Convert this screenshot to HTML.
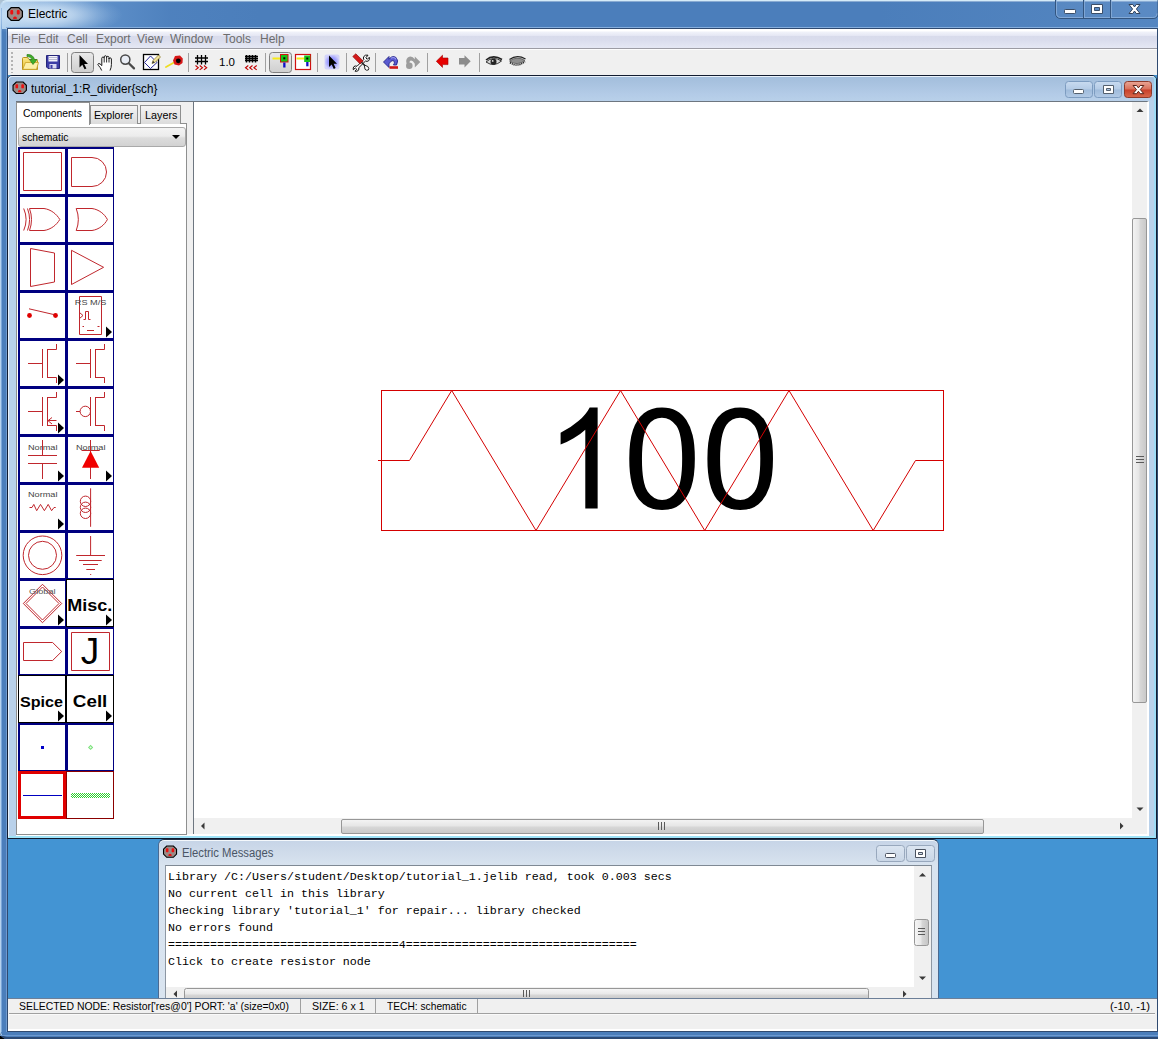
<!DOCTYPE html>
<html>
<head>
<meta charset="utf-8">
<title>Electric</title>
<style>
*{box-sizing:border-box;margin:0;padding:0}
html,body{width:1158px;height:1039px;overflow:hidden;background:#000}
body{font-family:"Liberation Sans",sans-serif;font-size:12px;color:#000;position:relative}
.abs{position:absolute}
svg{position:absolute;overflow:visible}
/* ---------- outer window frame ---------- */
#frame{left:0;top:0;width:1170px;height:1039px;border-radius:7px;background:#4b7ebb;overflow:hidden}
#frame-top{left:0;top:0;width:1170px;height:29px;background:linear-gradient(90deg,rgba(200,226,247,.85) 0,rgba(165,200,235,.62) 40px,rgba(120,168,220,.42) 100px,rgba(95,145,205,.16) 170px,rgba(80,130,195,0) 260px,rgba(80,130,195,0) 75%,rgba(120,165,215,.22) 100%)}
#frame-edge{left:0;top:0;width:1170px;height:1039px;border-radius:7px;border-top:1px solid #d5ebf8;border-left:1px solid #b5d2ee;border-bottom:2px solid #2c4a75;box-shadow:inset 0 1px 0 rgba(255,255,255,.35)}
#title-glow{left:-30px;top:-8px;width:170px;height:44px;background:radial-gradient(ellipse closest-side at 45% 52%,rgba(232,244,253,.8) 0,rgba(226,240,252,.62) 35%,rgba(215,233,250,.3) 65%,rgba(210,230,250,.1) 85%,rgba(210,230,250,0) 100%)}
#title{left:28px;top:7px;font-size:12px;line-height:14px;color:#000}
#client-border{left:7px;top:28px;width:1151px;height:1004px;background:#2f4a70}
#client{left:8px;top:29px;width:1149px;height:1002px;background:#4394d3}
/* ---------- menubar / toolbar ---------- */
#menubar{left:8px;top:29px;width:1149px;height:20px;background:linear-gradient(#ffffff 0,#ffffff 8%,#eff1f9 18%,#e4e6f3 36%,#d8dbeb 39%,#dadded 60%,#e5e8f4 100%);border-bottom:1px solid #9c9ca4}
.menu{top:32px;font-size:12px;line-height:14px;color:#6d6d6d}
#toolbar{left:8px;top:49px;width:1149px;height:26px;background:#f0f0f0;border-top:1px solid #fdfdfd}
.tsep{top:52px;width:2px;height:20px;border-left:1px solid #a0a0a0;border-right:1px solid #fff}
/* ---------- inner window ---------- */
#iw{left:7px;top:75px;width:1150px;height:764px;border:1px solid #121c30;border-radius:5px 5px 0 0;
 background:linear-gradient(180deg,#a2bddb 0,#a9c3e0 8px,#b3cbe7 18px,#b9d1ea 26px,#b9d1ea 100%)}
#iw-hl{left:8px;top:76px;width:1148px;height:762px;border:1px solid #e9f2fb;border-bottom:2px solid #9fe3f8;border-right:2px solid #9fdcf5;border-radius:4px 4px 0 0}
#iw-title{left:31.200px;top:82px;font-size:12px;line-height:14px;white-space:pre;transform-origin:0 0;transform:scaleX(.971)}
#iw-body{left:16px;top:101px;width:1133px;height:735px;background:#f0f0f0;border-top:1px solid #6d7680;border-right:2px solid #fff;border-bottom:2px solid #fff}
/* ---------- left tabbed pane ---------- */
.tab{font-size:11px;line-height:13px;text-align:center;border:1px solid #8e8f8f;border-bottom:none}
#tab1{left:16px;top:102px;width:74px;height:23px;background:#fff;padding-top:5px;font-size:11px}
#tab2{left:90px;top:105px;width:48px;height:19px;background:linear-gradient(#f4f4f4,#e6e6e6 55%,#dcdcdc);padding-top:4px}
#tab3{left:140px;top:105px;width:41px;height:19px;background:linear-gradient(#f4f4f4,#e6e6e6 55%,#dcdcdc);padding-top:4px}
#tabpane{left:16px;top:123px;width:171px;height:712px;background:#fff;border:1px solid #8e8f8f}
#combo{left:18px;top:127px;width:168px;height:20px;border:1px solid #a9a9a9;border-radius:3px;background:linear-gradient(#f4f4f4 0,#ececec 45%,#dcdcdc 55%,#d2d2d2 100%);font-size:11px;line-height:13px;padding:3px 0 0 3px}
#combo-arrow{left:172px;top:135px;width:0;height:0;border-left:4px solid transparent;border-right:4px solid transparent;border-top:4px solid #000}
.tt{font-size:11px;line-height:13px;white-space:pre;transform-origin:0 0}
/* ---------- canvas ---------- */
#canvas{left:193px;top:101px;width:939px;height:717px;background:#fff;border-left:1px solid #6d7680;border-top:1px solid #6d7680}
#vsb{left:1132px;top:102px;width:15px;height:716px;background:#f0f0f0}
#hsb{left:194px;top:818px;width:938px;height:16px;background:#f0f0f0}
.thumbv{border:1px solid #979797;border-radius:2px;background:linear-gradient(90deg,#f3f3f3 0,#e6e6e6 45%,#d7d7d7 55%,#c9c9c9 100%)}
.thumbh{border:1px solid #979797;border-radius:2px;background:linear-gradient(180deg,#f3f3f3 0,#e6e6e6 45%,#d7d7d7 55%,#c9c9c9 100%)}
/* ---------- palette ---------- */
#pal{left:18px;top:147px;width:96px;height:673px}
.cell{position:absolute;width:49px;height:49px;border:2px solid #000080;border-right-width:1px;border-bottom-width:1px;background:#fff}
/* ---------- messages ---------- */
#mw{left:158px;top:839px;width:781px;height:159px;border:1px solid #4a6a92;border-top-color:#1f2f47;border-bottom:none;border-radius:6px 6px 0 0;box-shadow:inset 0 1px 0 #f4f8fc;
 background:linear-gradient(180deg,#c6d4e7 0,#cfdbea 12px,#d8e3ef 25px,#d9e4f0 100%)}
#mw-title{left:181.500px;top:846px;font-size:12px;line-height:14px;color:#4a5566;white-space:pre;transform-origin:0 0;transform:scaleX(.939)}
#mw-body{left:165px;top:865px;width:767px;height:133px;background:#fff;border-top:1px solid #7f8994;border-left:1px solid #8d97a3;border-right:1px solid #8d97a3}
.msg{left:168px;font-family:"Liberation Mono",monospace;font-size:11.667px;line-height:14px;white-space:pre;color:#000}
/* ---------- status bar ---------- */
#status{left:8px;top:998px;width:1149px;height:33px;background:#f0f0f0;border-top:1px solid #6c7f98;border-bottom:2px solid #fff}
.st{top:1000px;font-size:11px;line-height:13px;white-space:pre;transform-origin:0 0}
.ssep{top:999px;width:1px;height:14px;background:#a0a0a0}
</style>
</head>
<body>
<div id="frame" class="abs"></div>
<div id="frame-top" class="abs"></div>
<div id="frame-edge" class="abs"></div>
<div class="abs" style="left:1px;top:8px;width:1px;height:1024px;background:#7ba6d8"></div>
<div class="abs" style="left:6px;top:29px;width:1px;height:1003px;background:#6f9bd0"></div>
<div class="abs" style="left:0;top:1035px;width:1158px;height:1px;background:#6c99cf"></div>
<div id="title-glow" class="abs"></div>
<div id="title" class="abs">Electric</div>
<div class="abs" style="left:6px;top:27px;width:1152px;height:1px;background:#86aedd"></div>
<div id="client-border" class="abs"></div>
<div id="client" class="abs"></div>

<div id="menubar" class="abs"></div>
<span class="menu abs" style="left:11px">File</span>
<span class="menu abs" style="left:38px">Edit</span>
<span class="menu abs" style="left:67px">Cell</span>
<span class="menu abs" style="left:96px">Export</span>
<span class="menu abs" style="left:137px">View</span>
<span class="menu abs" style="left:170px">Window</span>
<span class="menu abs" style="left:223px">Tools</span>
<span class="menu abs" style="left:260px">Help</span>

<div id="toolbar" class="abs"></div>
<svg width="1158" height="27" viewBox="0 49 1158 27" style="left:0;top:49px">
<defs>
<linearGradient id="btnsel" x1="0" y1="0" x2="0" y2="1"><stop offset="0" stop-color="#e9e9e9"/><stop offset="1" stop-color="#cfcfcf"/></linearGradient>
<linearGradient id="fold" x1="0" y1="0" x2="0" y2="1"><stop offset="0" stop-color="#fbe88a"/><stop offset="1" stop-color="#e8bf2c"/></linearGradient>
<radialGradient id="glow"><stop offset="0" stop-color="#7f7fff"/><stop offset=".6" stop-color="#a3a3ff"/><stop offset="1" stop-color="#d4d4fa"/></radialGradient>
</defs>
<!-- grip -->
<g fill="#b4b4b4"><rect x="11" y="52" width="2" height="2"/><rect x="11" y="56" width="2" height="2"/><rect x="11" y="60" width="2" height="2"/><rect x="11" y="64" width="2" height="2"/><rect x="11" y="68" width="2" height="2"/><rect x="11" y="72" width="2" height="1"/></g>
<!-- open -->
<path d="M22.5 69.5V58.5Q22.5 57.5 23.5 57.5H27.5L29 59.5H36.5Q37.5 59.5 37.5 60.5V69.5Z" fill="url(#fold)" stroke="#b8931c" stroke-width="1"/>
<path d="M22.8 69.3L25.5 62.5H38.5L36.5 69.3Z" fill="#fdf0a8" stroke="#c9a227" stroke-width=".8"/>
<path d="M27 54.5Q33 54 34.5 59.5H37L33 64.5L29.5 59.5H32Q31 56.5 27 56.5Z" fill="#3fae2a" stroke="#2c7d1c" stroke-width=".7"/>
<!-- save -->
<path d="M46.5 55.5H59.5V68.5H48L46.5 67Z" fill="#3b3ba6" stroke="#26267a" stroke-width="1"/>
<rect x="48.5" y="56" width="9" height="5.5" fill="#f4f4fb"/>
<path d="M49 57.5H57M49 59.5H57" stroke="#a9a9c9" stroke-width=".8"/>
<rect x="49.5" y="64" width="7" height="4.5" fill="#d7d7f2"/>
<rect x="50.5" y="65" width="2" height="3.5" fill="#3b3ba6"/>
<!-- separators -->
<g stroke="#a0a0a0" stroke-width="1">
<path d="M67.5 53V72M188.500 53V72M265.500 53V72M317.500 53V72M346.500 53V72M375.500 53V72M427.500 53V72M479.500 53V72"/>
</g>
<!-- selected button 1 -->
<rect x="71.500" y="52.500" width="22" height="20" rx="3" fill="url(#btnsel)" stroke="#7f7f7f"/>
<path d="M79.500 55V67.500L82.300 64.800L84.600 69.300L86.400 68.400L84.200 64H88Z" fill="#000"/>
<!-- hand -->
<path d="M101.700 70.500Q100.500 67.500 98.300 65.300Q97.300 64 98.500 63.500Q100 63.300 101.800 65.600V58.200Q102 57 103 57Q104 57 104.200 58.200V56.900Q104.400 55.700 105.400 55.700Q106.400 55.700 106.600 56.900V57.500Q106.800 56.300 107.800 56.300Q108.800 56.300 109 57.500V59Q109.200 57.900 110.200 57.900Q111.200 57.900 111.400 59V64.500Q111.400 67.500 110 70.500" fill="#fdfdfd" stroke="#1a1a1a" stroke-width="1" stroke-linejoin="round"/>
<path d="M104.200 58.200V62.500M106.600 57V62.500M109 58V62.500" stroke="#1a1a1a" stroke-width=".9" fill="none"/>
<!-- magnifier -->
<circle cx="125.300" cy="59.600" r="4.600" fill="#e9edf5" stroke="#4a4a4a" stroke-width="1.500"/>
<path d="M128.800 63.200L134 68.400" stroke="#4a4a4a" stroke-width="2.200" stroke-linecap="round"/>
<!-- outline edit -->
<rect x="143.500" y="54.500" width="15" height="15" fill="#fff" stroke="#000" stroke-width="1.300"/>
<path d="M150.500 56L157 62.500L150.500 68.500L144.500 62.500Z" fill="none" stroke="#2b2b9a" stroke-width="1"/>
<path d="M152 63.500L153 60.500L158.500 55L160.500 57L155 62.500Z" fill="#f3e39a" stroke="#8a7a2e" stroke-width=".7"/>
<path d="M152 63.500L153 60.800L154.700 62.500Z" fill="#333"/>
<!-- measure -->
<path d="M166 67L174 62.500" stroke="#eedd22" stroke-width="1.800" stroke-linecap="round"/>
<path d="M175 56L180 55.500L182.800 58.500L182.500 63L179 65.500L174.500 64.500L173 60.500Z" fill="#d81818"/>
<circle cx="178.300" cy="60.800" r="2.400" fill="#000"/>
<!-- grid coarse -->
<path d="M197.500 55V64.500M201.500 55V64.500M205.500 55V64.500M195 58H208M195 61.500H208" stroke="#000" stroke-width="1.300"/>
<path d="M195.500 65.500L198.300 67.700L195.500 69.900M199.700 65.500L202.500 67.700L199.700 69.900M203.900 65.500L206.700 67.700L203.900 69.900" stroke="#c00000" stroke-width="1.100" fill="none"/>
<text x="227" y="66" font-family="Liberation Sans, sans-serif" font-size="11.500" text-anchor="middle" fill="#000">1.0</text>
<!-- grid fine -->
<path d="M246.500 55V62.500M249.500 55V62.500M252.500 55V62.500M255.500 55V62.500M245 56.500H258M245 58.500H258M245 60.500H258" stroke="#000" stroke-width="1.500"/>
<path d="M248.300 65.500L245.500 67.700L248.300 69.900M252.500 65.500L249.700 67.700L252.500 69.900M256.700 65.500L253.900 67.700L256.700 69.900" stroke="#c00000" stroke-width="1.100" fill="none"/>
<!-- selected button 2 + object select icon -->
<rect x="269.500" y="52.500" width="22" height="20" rx="3" fill="url(#btnsel)" stroke="#7f7f7f"/>
<rect x="272.500" y="57.500" width="8.500" height="2" fill="#f7ea17"/>
<rect x="280.500" y="54.500" width="7.500" height="7.500" fill="#16c416" stroke="#d01010" stroke-width="1"/>
<rect x="283.300" y="57.300" width="2" height="2" fill="#000"/>
<rect x="283.200" y="62.500" width="2.300" height="5" fill="#1010c8"/>
<!-- area select icon -->
<rect x="295.500" y="54.500" width="15" height="15" fill="#fff" stroke="#d01010" stroke-width="1.200"/>
<rect x="296.500" y="57.500" width="8" height="2" fill="#f7ea17"/>
<rect x="304.200" y="55.500" width="6" height="6.500" fill="#16c416"/>
<rect x="306.300" y="57.500" width="2" height="2" fill="#000"/>
<rect x="306.200" y="62" width="2.300" height="4.300" fill="#1010c8"/>
<!-- special select -->
<rect x="324.500" y="54.500" width="15" height="15" rx="2" fill="url(#glow)"/>
<path d="M329 55.500V67L331.700 64.500L333.800 69L335.600 68.100L333.600 63.800H337Z" fill="#000"/>
<!-- prefs: screwdriver + wrench -->
<path d="M368 55.200Q365.200 54.500 363.800 56.500Q363 58 363.800 59.500L357 66.300Q355.500 65.500 354 66.500Q352.800 67.800 353.300 69.800L355.300 67.900L356.800 69.300L355 71.200Q357 71.700 358.300 70.500Q359.300 69 358.700 67.800L365.500 61Q367 61.800 368.600 60.800Q369.800 59.500 369.300 57.300L367.300 59.300L365.800 57.800Z" fill="#fff" stroke="#111" stroke-width="1" stroke-linejoin="round"/>
<path d="M352.800 56.500L355.800 53.800L363.200 61L360.200 64Z" fill="#d41a1a" stroke="#8e0d0d" stroke-width=".7"/>
<path d="M361.500 62.300L365 65.800" stroke="#222" stroke-width="1.400"/>
<path d="M364.300 65L367.800 66.500Q369.500 68.500 368.300 70Q366.500 70.800 365 69.300Z" fill="#fff" stroke="#111" stroke-width=".9" stroke-linejoin="round"/>
<!-- undo -->
<path d="M383.500 62L389 56.500V59.300Q392 55 396 57.500Q399 60.500 396.500 65H393.500Q395.500 61.500 393 60.500Q391 60.300 389 63.800V67.500Z" fill="#5a5ad0" stroke="#26268a" stroke-width=".9" stroke-linejoin="round"/>
<path d="M391 58.300Q394 56.300 396.300 59.300" stroke="#9a9af0" stroke-width="1.100" fill="none"/>
<rect x="389.500" y="66.200" width="8.500" height="2.600" fill="#d01818"/>
<!-- redo (disabled) -->
<path d="M420.300 62L414.800 56.500V59.300Q411.800 55 407.800 57.500Q404.800 60.500 407.300 65H410.300Q408.300 61.500 410.800 60.500Q412.800 60.300 414.800 63.800V67.500Z" fill="#9c9c9c"/>
<circle cx="409.300" cy="65.800" r="3.300" fill="#9c9c9c"/>
<!-- back / fwd -->
<path d="M436.300 61.300L442.500 55.200V58H448V64.600H442.500V67.400Z" fill="#e60000" stroke="#a00000" stroke-width=".6"/>
<path d="M470.700 61.300L464.500 55.200V58H459V64.600H464.500V67.400Z" fill="#8c8c8c"/>
<!-- eye open -->
<path d="M486 62Q493 55.500 501.500 61Q494 67.500 486 62Z" fill="#d9d9d9" stroke="#333" stroke-width="1"/>
<path d="M486 60Q493 54 502 59.500" stroke="#222" stroke-width="1.600" fill="none"/>
<circle cx="493.500" cy="61.700" r="3" fill="#222"/>
<circle cx="492.700" cy="60.900" r=".9" fill="#ddd"/>
<!-- eye closed -->
<path d="M509.500 61Q517 55.500 525 60.500Q517 66.500 509.500 61Z" fill="#8e8e8e" stroke="#555" stroke-width=".8"/>
<path d="M509.500 59.500Q517 54 525.500 59" stroke="#222" stroke-width="1.400" fill="none"/>
<path d="M510 62.500Q517 68 525 61.500" stroke="#222" stroke-width="1.600" fill="none" stroke-dasharray="1.200 .8"/>
</svg>


<div id="iw" class="abs"></div>
<div id="iw-hl" class="abs"></div>
<div id="iw-title" class="abs">tutorial_1:R_divider{sch}</div>
<div id="iw-body" class="abs"></div>

<div id="tabpane" class="abs"></div>
<div id="tab1" class="abs tab"></div>
<div id="tab2" class="abs tab"></div>
<div id="tab3" class="abs tab"></div>
<div class="abs tt" style="left:22.900px;top:107px;transform:scaleX(.944)">Components</div>
<div class="abs tt" style="left:94.300px;top:109px;transform:scaleX(.96)">Explorer</div>
<div class="abs tt" style="left:145px;top:109px;transform:scaleX(.98)">Layers</div>
<div id="combo" class="abs"></div>
<div class="abs tt" style="left:21.700px;top:131px;transform:scaleX(.937)">schematic</div>
<div id="combo-arrow" class="abs"></div>

<div id="pal" class="abs">
<svg width="96" height="673" viewBox="0 0 96 673" style="left:0;top:0" shape-rendering="auto"><g transform="translate(0,0)"><rect x="0" y="0" width="48" height="48" fill="#fff"/><path d="M0 0H48V48H0Z M2 2V47H47V2Z" fill="#000080" fill-rule="evenodd"/><path d="M5.5 5.5H43.5V43.5H5.5Z" fill="none" stroke="#c0272d" stroke-width="1" /></g>
<g transform="translate(48,0)"><rect x="0" y="0" width="48" height="48" fill="#fff"/><path d="M0 0H48V48H0Z M2 2V47H47V2Z" fill="#000080" fill-rule="evenodd"/><path d="M5.5 10.5H26A14.5 14.5 0 0 1 26 39.5H5.5Z" fill="none" stroke="#c0272d" stroke-width="1" /></g>
<g transform="translate(0,48)"><rect x="0" y="0" width="48" height="48" fill="#fff"/><path d="M0 0H48V48H0Z M2 2V47H47V2Z" fill="#000080" fill-rule="evenodd"/><path d="M11.5 13.5H26C33 14.5 38.5 19 41.8 24.5C38.5 30 33 34.500 26 35.500H11.5Q15.5 24.5 11.5 13.5Z" fill="none" stroke="#c0272d" stroke-width="1" /><path d="M5.7 13.5Q10.5 24.5 5.7 35.5" fill="none" stroke="#c0272d" stroke-width="1" /><path d="M9.5 13.5Q13.700 24.5 9.5 35.5" fill="none" stroke="#c0272d" stroke-width="1" /></g>
<g transform="translate(48,48)"><rect x="0" y="0" width="48" height="48" fill="#fff"/><path d="M0 0H48V48H0Z M2 2V47H47V2Z" fill="#000080" fill-rule="evenodd"/><path d="M10.2 13.5H26C33 14.5 38.5 19 41.4 24.5C38.5 30 33 34.5 26 35.5H10.2Q14.5 24.5 10.2 13.5Z" fill="none" stroke="#c0272d" stroke-width="1" /></g>
<g transform="translate(0,96)"><rect x="0" y="0" width="48" height="48" fill="#fff"/><path d="M0 0H48V48H0Z M2 2V47H47V2Z" fill="#000080" fill-rule="evenodd"/><path d="M12.5 5.5L36.5 10V39L12.5 43.5Z" fill="none" stroke="#c0272d" stroke-width="1" /></g>
<g transform="translate(48,96)"><rect x="0" y="0" width="48" height="48" fill="#fff"/><path d="M0 0H48V48H0Z M2 2V47H47V2Z" fill="#000080" fill-rule="evenodd"/><path d="M5.5 7.3L37.6 24.3L5.5 41.5Z" fill="none" stroke="#c0272d" stroke-width="1" /></g>
<g transform="translate(0,144)"><rect x="0" y="0" width="48" height="48" fill="#fff"/><path d="M0 0H48V48H0Z M2 2V47H47V2Z" fill="#000080" fill-rule="evenodd"/><circle cx="11.5" cy="24.5" r="2.4" fill="#e00000"/><circle cx="37.5" cy="24.5" r="2.4" fill="#e00000"/><path d="M11 17.8L36 23.6" fill="none" stroke="#c0272d" stroke-width="1" /></g>
<g transform="translate(48,144)"><rect x="0" y="0" width="48" height="48" fill="#fff"/><path d="M0 0H48V48H0Z M2 2V47H47V2Z" fill="#000080" fill-rule="evenodd"/><path d="M13.5 5.5H35.5V43.5H13.5Z" fill="none" stroke="#c0272d" stroke-width="1" /><path d="M13.5 21.5L17 24.5L13.5 27.5" fill="none" stroke="#c0272d" stroke-width="1" /><path d="M17.5 28.5H19.5V20.5H22.5V28.5H24.5" fill="none" stroke="#c0272d" stroke-width="1" /><path d="M16.5 35.5H18M31.5 35.5H33.5M21 39.5H28" fill="none" stroke="#c0272d" stroke-width="1" /><text x="24.6" y="13.5" font-family="Liberation Sans, sans-serif" font-size="8" font-weight="normal" fill="#444" text-anchor="middle" textLength="31.5" lengthAdjust="spacingAndGlyphs">RS M/S</text><path d="M40 35.5L46 41L40 46.5Z" fill="#000"/></g>
<g transform="translate(0,192)"><rect x="0" y="0" width="48" height="48" fill="#fff"/><path d="M0 0H48V48H0Z M2 2V47H47V2Z" fill="#000080" fill-rule="evenodd"/><path d="M10 24.5H24.5M24.5 10V39M29.5 10V39M29.5 10.5H38.5V5M29.5 38.5H38.5V44" fill="none" stroke="#c0272d" stroke-width="1" /><path d="M40 35.5L46 41L40 46.5Z" fill="#000"/></g>
<g transform="translate(48,192)"><rect x="0" y="0" width="48" height="48" fill="#fff"/><path d="M0 0H48V48H0Z M2 2V47H47V2Z" fill="#000080" fill-rule="evenodd"/><path d="M10 24.5H24.5M24.5 10V39M29.5 10V39M29.5 10.5H38.5V5M29.5 38.5H38.5V44" fill="none" stroke="#c0272d" stroke-width="1" /></g>
<g transform="translate(0,240)"><rect x="0" y="0" width="48" height="48" fill="#fff"/><path d="M0 0H48V48H0Z M2 2V47H47V2Z" fill="#000080" fill-rule="evenodd"/><path d="M10 24.5H24.5M24.5 10V39M29.5 10V39M29.5 10.5H38.5V5M29.5 38.5H38.5V44" fill="none" stroke="#c0272d" stroke-width="1" /><path d="M38.5 33.5H30M34 30.5L30 33.7L34 37" fill="none" stroke="#c0272d" stroke-width="1" /><path d="M40 35.5L46 41L40 46.5Z" fill="#000"/></g>
<g transform="translate(48,240)"><rect x="0" y="0" width="48" height="48" fill="#fff"/><path d="M0 0H48V48H0Z M2 2V47H47V2Z" fill="#000080" fill-rule="evenodd"/><path d="M10 24.5H14M24.5 10V39M29.5 10V39M29.5 10.5H38.5V5M29.5 38.5H38.5V44" fill="none" stroke="#c0272d" stroke-width="1" /><circle cx="19.3" cy="24.4" r="5.2" fill="none" stroke="#c0272d"/></g>
<g transform="translate(0,288)"><rect x="0" y="0" width="48" height="48" fill="#fff"/><path d="M0 0H48V48H0Z M2 2V47H47V2Z" fill="#000080" fill-rule="evenodd"/><text x="24.7" y="15" font-family="Liberation Sans, sans-serif" font-size="8" font-weight="normal" fill="#444" text-anchor="middle" textLength="29.5" lengthAdjust="spacingAndGlyphs">Normal</text><path d="M24.5 5V20.5M10 20.5H39M10 28.5H39M24.5 28.5V44" fill="none" stroke="#c0272d" stroke-width="1" /><path d="M40 35.5L46 41L40 46.5Z" fill="#000"/></g>
<g transform="translate(48,288)"><rect x="0" y="0" width="48" height="48" fill="#fff"/><path d="M0 0H48V48H0Z M2 2V47H47V2Z" fill="#000080" fill-rule="evenodd"/><text x="24.7" y="15" font-family="Liberation Sans, sans-serif" font-size="8" font-weight="normal" fill="#444" text-anchor="middle" textLength="29.5" lengthAdjust="spacingAndGlyphs">Normal</text><path d="M24.5 5V44M15.5 15.5H33.7" fill="none" stroke="#c0272d" stroke-width="1" /><path d="M24.6 16L33.2 32.8H16Z" fill="#f00000"/><path d="M40 35.5L46 41L40 46.5Z" fill="#000"/></g>
<g transform="translate(0,336)"><rect x="0" y="0" width="48" height="48" fill="#fff"/><path d="M0 0H48V48H0Z M2 2V47H47V2Z" fill="#000080" fill-rule="evenodd"/><text x="24.7" y="13.8" font-family="Liberation Sans, sans-serif" font-size="8" font-weight="normal" fill="#444" text-anchor="middle" textLength="29.5" lengthAdjust="spacingAndGlyphs">Normal</text><path d="M11.5 24.5H14L15.8 21.4L18.7 27.7L22.5 21.4L26.4 27.7L30.2 21.4L33.6 27.7L36 24.5H37.7" fill="none" stroke="#c0272d" stroke-width="1" /><path d="M40 35.5L46 41L40 46.5Z" fill="#000"/></g>
<g transform="translate(48,336)"><rect x="0" y="0" width="48" height="48" fill="#fff"/><path d="M0 0H48V48H0Z M2 2V47H47V2Z" fill="#000080" fill-rule="evenodd"/><path d="M24.6 5.3V43.8" fill="none" stroke="#c0272d" stroke-width="1" /><circle cx="19.5" cy="18.3" r="5.2" fill="none" stroke="#c0272d"/><circle cx="19.5" cy="24.3" r="5.2" fill="none" stroke="#c0272d"/><circle cx="19.5" cy="30.3" r="5.2" fill="none" stroke="#c0272d"/></g>
<g transform="translate(0,384)"><rect x="0" y="0" width="48" height="48" fill="#fff"/><path d="M0 0H48V48H0Z M2 2V47H47V2Z" fill="#000080" fill-rule="evenodd"/><circle cx="24.5" cy="24.3" r="19.3" fill="none" stroke="#c0272d"/><circle cx="24.5" cy="24.3" r="14" fill="none" stroke="#c0272d"/></g>
<g transform="translate(48,384)"><rect x="0" y="0" width="48" height="48" fill="#fff"/><path d="M0 0H48V48H0Z M2 2V47H47V2Z" fill="#000080" fill-rule="evenodd"/><path d="M24.6 5V24.5M10.2 24.5H39M13 29.5H35.7M17 33.5H32M20.3 38.5H29M24.2 43.5H25.2" fill="none" stroke="#c0272d" stroke-width="1" /></g>
<g transform="translate(0,432)"><rect x="0" y="0" width="48" height="48" fill="#fff"/><path d="M0 0H48V48H0Z M2 2V47H47V2Z" fill="#000080" fill-rule="evenodd"/><path d="M24.5 5.3L43.7 24.5L24.5 43.7L5.3 24.5Z" fill="none" stroke="#c0272d" stroke-width="1" /><path d="M24.5 8L41 24.5L24.5 41L8 24.5Z" fill="none" stroke="#c0272d" stroke-width="1" /><text x="24.3" y="15.4" font-family="Liberation Sans, sans-serif" font-size="8" font-weight="normal" fill="#555" text-anchor="middle" textLength="26.5" lengthAdjust="spacingAndGlyphs">Global</text><path d="M40 35.5L46 41L40 46.5Z" fill="#000"/></g>
<g transform="translate(48,432)"><rect x="0" y="0" width="48" height="48" fill="#fff"/><path d="M0 0H48V48H0Z M1 1V47H47V1Z" fill="#000" fill-rule="evenodd"/><text x="23.7" y="32.2" font-family="Liberation Sans, sans-serif" font-size="16" font-weight="bold" fill="#000" text-anchor="middle" textLength="45" lengthAdjust="spacingAndGlyphs">Misc.</text><path d="M40 35.5L46 41L40 46.5Z" fill="#000"/></g>
<g transform="translate(0,480)"><rect x="0" y="0" width="48" height="48" fill="#fff"/><path d="M0 0H48V48H0Z M2 2V47H47V2Z" fill="#000080" fill-rule="evenodd"/><path d="M5.5 15.5H34.6L43.7 24.5L34.6 33.5H5.5Z" fill="none" stroke="#c0272d" stroke-width="1" /></g>
<g transform="translate(48,480)"><rect x="0" y="0" width="48" height="48" fill="#fff"/><path d="M0 0H48V48H0Z M2 2V47H47V2Z" fill="#000080" fill-rule="evenodd"/><path d="M5.5 5.5H43.5V43.5H5.5Z" fill="none" stroke="#c0272d" stroke-width="1" /><text x="24" y="37.2" font-family="Liberation Sans, sans-serif" font-size="37" font-weight="normal" fill="#000" text-anchor="middle">J</text></g>
<g transform="translate(0,528)"><rect x="0" y="0" width="48" height="48" fill="#fff"/><path d="M0 0H48V48H0Z M1 1V47H47V1Z" fill="#000" fill-rule="evenodd"/><text x="23.5" y="31.6" font-family="Liberation Sans, sans-serif" font-size="15.5" font-weight="bold" fill="#000" text-anchor="middle" textLength="43" lengthAdjust="spacingAndGlyphs">Spice</text><path d="M40 35.5L46 41L40 46.5Z" fill="#000"/></g>
<g transform="translate(48,528)"><rect x="0" y="0" width="48" height="48" fill="#fff"/><path d="M0 0H48V48H0Z M1 1V47H47V1Z" fill="#000" fill-rule="evenodd"/><text x="24.1" y="32.2" font-family="Liberation Sans, sans-serif" font-size="16.7" font-weight="bold" fill="#000" text-anchor="middle" textLength="34.5" lengthAdjust="spacingAndGlyphs">Cell</text><path d="M40 35.5L46 41L40 46.5Z" fill="#000"/></g>
<g transform="translate(0,576)"><rect x="0" y="0" width="48" height="48" fill="#fff"/><path d="M0 0H48V48H0Z M2 2V47H47V2Z" fill="#000080" fill-rule="evenodd"/><rect x="23" y="23" width="3" height="3" fill="#0000c8"/></g>
<g transform="translate(48,576)"><rect x="0" y="0" width="48" height="48" fill="#fff"/><path d="M0 0H48V48H0Z M2 2V47H47V2Z" fill="#000080" fill-rule="evenodd"/><path d="M24.6 21.8L27.2 24.4L24.6 27L22 24.4Z" fill="#7ae07a"/><path d="M24.6 23.2L25.8 24.4L24.6 25.6L23.4 24.4Z" fill="#e8ffe8"/></g>
<g transform="translate(0,624)"><rect x="0" y="0" width="48" height="48" fill="#fff"/><path d="M0 0H48V48H0Z M3 3V45H45V3Z" fill="#e00000" fill-rule="evenodd"/><rect x="5" y="24" width="39" height="1" fill="#0000c0"/></g>
<g transform="translate(48,624)"><rect x="0" y="0" width="48" height="48" fill="#fff"/><path d="M0 0H48V48H0Z M1 1V47H47V1Z" fill="#8b0000" fill-rule="evenodd"/><defs><pattern id="stip" width="2" height="2" patternUnits="userSpaceOnUse"><rect width="2" height="2" fill="#fff"/><rect width="1" height="1" fill="#30d030"/><rect x="1" y="1" width="1" height="1" fill="#30d030"/></pattern></defs><rect x="5" y="22" width="39" height="5" fill="url(#stip)"/></g></svg>
</div>

<div id="canvas" class="abs"></div>
<div id="vsb" class="abs"></div>
<div id="hsb" class="abs"></div>
<div class="abs" style="left:193px;top:818px;width:1px;height:16px;background:#6d7680"></div>
<div class="abs thumbv" style="left:1132px;top:218px;width:15px;height:485px"></div>
<div class="abs thumbh" style="left:341px;top:819px;width:643px;height:15px"></div>
<svg width="939" height="717" viewBox="193 101 939 717" style="left:193px;top:101px">
<g transform="translate(545.3,508.4) scale(0.0686,-0.0686)" fill="#000">
<path d="M763 0H583V1147Q518 1085 412.5 1023T223 930V1104Q374 1175 487 1276T647 1472H763Z"/>
<path transform="translate(1139,0)" fill-rule="evenodd" d="M85 723Q85 983 138.5 1141.5T297.5 1386T563 1472Q681 1472 770 1424.5T917 1287.5T1008 1069.5T1041 723Q1041 465 988 306.5T829.5 61.5T563 -25Q348 -25 225 129Q85 306 85 723ZM270 723Q270 362 354.5 242.5T563 123T771.5 243T856 723Q856 1085 771.5 1204T561 1323Q438 1323 364 1219Q270 1085 270 723Z"/>
<path transform="translate(2278,0)" fill-rule="evenodd" d="M85 723Q85 983 138.5 1141.5T297.5 1386T563 1472Q681 1472 770 1424.5T917 1287.5T1008 1069.5T1041 723Q1041 465 988 306.5T829.5 61.5T563 -25Q348 -25 225 129Q85 306 85 723ZM270 723Q270 362 354.5 242.5T563 123T771.5 243T856 723Q856 1085 771.5 1204T561 1323Q438 1323 364 1219Q270 1085 270 723Z"/>
</g>
<g fill="none" stroke="#d40000" stroke-width="1" shape-rendering="crispEdges">
<rect x="381.500" y="390.500" width="562" height="140"/>
</g>
<path d="M378 460.500H409.500L451.700 390.500L536 530.500L620.500 390.500L704.700 530.500L789 390.500L873.200 530.500L915.500 460.500H943.500" fill="none" stroke="#d40000" stroke-width="1"/>
</svg>


<div id="mw" class="abs"></div>
<div id="mw-title" class="abs">Electric Messages</div>
<div id="mw-body" class="abs"></div>
<div class="abs msg" style="top:870px">Library /C:/Users/student/Desktop/tutorial_1.jelib read, took 0.003 secs</div>
<div class="abs msg" style="top:887px">No current cell in this library</div>
<div class="abs msg" style="top:904px">Checking library 'tutorial_1' for repair... library checked</div>
<div class="abs msg" style="top:921px">No errors found</div>
<div class="abs msg" style="top:938px">=================================4=================================</div>
<div class="abs msg" style="top:955px">Click to create resistor node</div>

<svg width="1158" height="1039" viewBox="0 0 1158 1039" style="left:0;top:0">
<defs>

<linearGradient id="ibtn" x1="0" y1="0" x2="0" y2="1"><stop offset="0" stop-color="#c9dbf0"/><stop offset=".48" stop-color="#b4cbe6"/><stop offset=".52" stop-color="#9fbbdb"/><stop offset="1" stop-color="#b2cae6"/></linearGradient>
<linearGradient id="ibtnc" x1="0" y1="0" x2="0" y2="1"><stop offset="0" stop-color="#e9a797"/><stop offset=".48" stop-color="#d9705a"/><stop offset=".52" stop-color="#c8402a"/><stop offset="1" stop-color="#d8694c"/></linearGradient>
<linearGradient id="mbtn" x1="0" y1="0" x2="0" y2="1"><stop offset="0" stop-color="#dbe5f1"/><stop offset="1" stop-color="#c9d6e6"/></linearGradient>
<linearGradient id="thv" x1="0" y1="0" x2="1" y2="0"><stop offset="0" stop-color="#f6f6f6"/><stop offset=".45" stop-color="#e9e9e9"/><stop offset=".55" stop-color="#d6d6d6"/><stop offset="1" stop-color="#c4c4c4"/></linearGradient>
<linearGradient id="thh" x1="0" y1="0" x2="0" y2="1"><stop offset="0" stop-color="#f6f6f6"/><stop offset=".45" stop-color="#e9e9e9"/><stop offset=".55" stop-color="#d6d6d6"/><stop offset="1" stop-color="#c4c4c4"/></linearGradient>
</defs>
<!-- app icons -->
<g transform="translate(7,7)">
 <path d="M4.200 .6H11.800L15.400 4.200V9.800L11.800 13.400H4.200L.6 9.800V4.200Z" fill="#9b8a86" stroke="#000" stroke-width="1.250"/>
 <rect x="3.300" y="3" width="2.900" height="4.600" rx="1" fill="#ec1010"/>
 <rect x="9.800" y="3" width="2.900" height="4.600" rx="1" fill="#ec1010"/>
 <path d="M6.200 12V10.400Q8 8.600 9.800 10.400V12Z" fill="#e81010"/>
</g>
<g transform="translate(12.500,81.500) scale(.9)">
 <path d="M4.200 .6H11.800L15.400 4.200V9.800L11.800 13.400H4.200L.6 9.800V4.200Z" fill="#9b8a86" stroke="#000" stroke-width="1.250"/>
 <rect x="3.300" y="3" width="2.900" height="4.600" rx="1" fill="#ec1010"/>
 <rect x="9.800" y="3" width="2.900" height="4.600" rx="1" fill="#ec1010"/>
 <path d="M6.200 12V10.400Q8 8.600 9.800 10.400V12Z" fill="#e81010"/>
</g>
<g transform="translate(163,845.500) scale(.88)">
 <path d="M4.200 .6H11.800L15.400 4.200V9.800L11.800 13.400H4.200L.6 9.800V4.200Z" fill="#9b8a86" stroke="#000" stroke-width="1.250"/>
 <rect x="3.300" y="3" width="2.900" height="4.600" rx="1" fill="#ec1010"/>
 <rect x="9.800" y="3" width="2.900" height="4.600" rx="1" fill="#ec1010"/>
 <path d="M6.200 12V10.400Q8 8.600 9.800 10.400V12Z" fill="#e81010"/>
</g>
<!-- outer caption buttons -->
<path d="M1055.500 0V13Q1055.500 18.500 1061 18.500H1153Q1158 18.500 1158 14V0" fill="rgba(120,160,210,.18)" stroke="#33557f" stroke-width="1"/>
<path d="M1056.500 0V13Q1056.500 17.500 1061 17.500H1152.500Q1157 17.500 1157 13.500" fill="none" stroke="#8fb2dc" stroke-width="1" opacity=".8"/>
<path d="M1083.500 0V18M1110.500 0V18" stroke="#33557f" stroke-width="1"/>
<path d="M1084.500 0V17M1111.500 0V17" stroke="#8fb2dc" stroke-width="1" opacity=".7"/>
<rect x="1064.500" y="9.500" width="11" height="4" rx=".8" fill="#fff" stroke="#3b4e68" stroke-width="1"/>
<path d="M1091.500 4.500H1102.500V13.500H1091.500Z M1094.500 7.500V10.500H1099.500V7.500Z" fill="#fff" fill-rule="evenodd" stroke="#3b4e68" stroke-width="1"/>
<path d="M1129 4.500H1132.800L1134.500 7L1136.200 4.500H1140L1136.400 9L1140 13.500H1136.200L1134.500 11L1132.800 13.500H1129L1132.600 9Z" fill="#fff" stroke="#33445c" stroke-width="1" stroke-linejoin="round"/>
<!-- inner window buttons -->
<rect x="1065.500" y="81.500" width="27" height="16" rx="3" fill="url(#ibtn)" stroke="#7d9cc0"/>
<rect x="1094.500" y="81.500" width="27" height="16" rx="3" fill="url(#ibtn)" stroke="#7d9cc0"/>
<rect x="1124.500" y="81.500" width="27" height="16" rx="3" fill="url(#ibtnc)" stroke="#8e3a2a"/>
<rect x="1073.500" y="89.500" width="10" height="4" rx="1" fill="#fff" stroke="#54606e" stroke-width="1"/>
<path d="M1103.500 85.500H1113.500V93.500H1103.500Z M1106.500 88.500V90.500H1110.500V88.500Z" fill="#fff" fill-rule="evenodd" stroke="#54606e" stroke-width="1"/>
<path d="M1133 85.500H1136.600L1138.400 87.900L1140.200 85.500H1143.800L1140.300 89.600L1143.800 93.700H1140.200L1138.400 91.300L1136.600 93.700H1133L1136.500 89.600Z" fill="#fff" stroke="#5a2218" stroke-width="1" stroke-linejoin="round"/>
<!-- messages window buttons -->
<rect x="876.500" y="845.500" width="28" height="16" rx="3" fill="url(#mbtn)" stroke="#98a8bd"/>
<rect x="906.500" y="845.500" width="28" height="16" rx="3" fill="url(#mbtn)" stroke="#98a8bd"/>
<rect x="885.500" y="853.500" width="10" height="4" rx="1" fill="#fff" stroke="#4a5260" stroke-width="1"/>
<path d="M915.500 849.500H925.500V857.500H915.500Z M918.500 852.500V854.500H922.500V852.500Z" fill="#fff" fill-rule="evenodd" stroke="#4a5260" stroke-width="1"/>
<!-- canvas scrollbar arrows -->
<path d="M1136.500 112L1140 108.500L1143.500 112Z" fill="#3a3a3a"/>
<path d="M1136.500 807.500L1140 811L1143.500 807.500Z" fill="#3a3a3a"/>
<path d="M204.500 822.500L201 826L204.500 829.500Z" fill="#3a3a3a"/>
<path d="M1120 822.500L1123.500 826L1120 829.500Z" fill="#3a3a3a"/>
<!-- canvas scrollbar grips -->
<path d="M1136 456.500H1144M1136 459.500H1144M1136 462.500H1144" stroke="#5a5a5a" stroke-width="1"/>
<path d="M658.500 822V830M661.500 822V830M664.500 822V830" stroke="#5a5a5a" stroke-width="1"/>
<!-- messages scrollbars -->
<rect x="914" y="866" width="17" height="121" fill="#f0f0f0"/>
<rect x="166" y="987" width="765" height="11" fill="#f0f0f0"/>
<rect x="914.500" y="919.500" width="14" height="26" rx="2" fill="url(#thv)" stroke="#979797"/>
<path d="M918 928.500H925M918 931.500H925M918 934.500H925" stroke="#5a5a5a" stroke-width="1"/>
<path d="M919 876.500L922.500 873L926 876.500Z" fill="#3a3a3a"/>
<path d="M919 976.500L922.500 980L926 976.500Z" fill="#3a3a3a"/>
<rect x="184.500" y="988.500" width="684" height="12" rx="2" fill="url(#thh)" stroke="#979797"/>
<path d="M523.500 990V997M526.500 990V997M529.500 990V997" stroke="#5a5a5a" stroke-width="1"/>
<path d="M177 990.500L173.500 994L177 997.500Z" fill="#3a3a3a"/>
<path d="M903 990.500L906.500 994L903 997.500Z" fill="#3a3a3a"/>
</svg>

<div id="status" class="abs"></div>
<div class="abs" style="left:9px;top:1013px;width:1146px;height:1px;background:#a0a0a0"></div>
<div class="abs" style="left:9px;top:1014px;width:1146px;height:1px;background:#fafafa"></div>
<div class="abs st" style="left:18.700px;transform:scaleX(.947)">SELECTED NODE: Resistor['res@0'] PORT: 'a' (size=0x0)</div>
<div class="abs ssep" style="left:300px"></div>
<div class="abs st" style="left:312px;transform:scaleX(.967)">SIZE: 6 x 1</div>
<div class="abs ssep" style="left:375px"></div>
<div class="abs st" style="left:387.200px;transform:scaleX(.929)">TECH: schematic</div>
<div class="abs ssep" style="left:477px"></div>
<div class="abs st" style="left:1110px;transform:scaleX(1.02)">(-10, -1)</div>
</body>
</html>
